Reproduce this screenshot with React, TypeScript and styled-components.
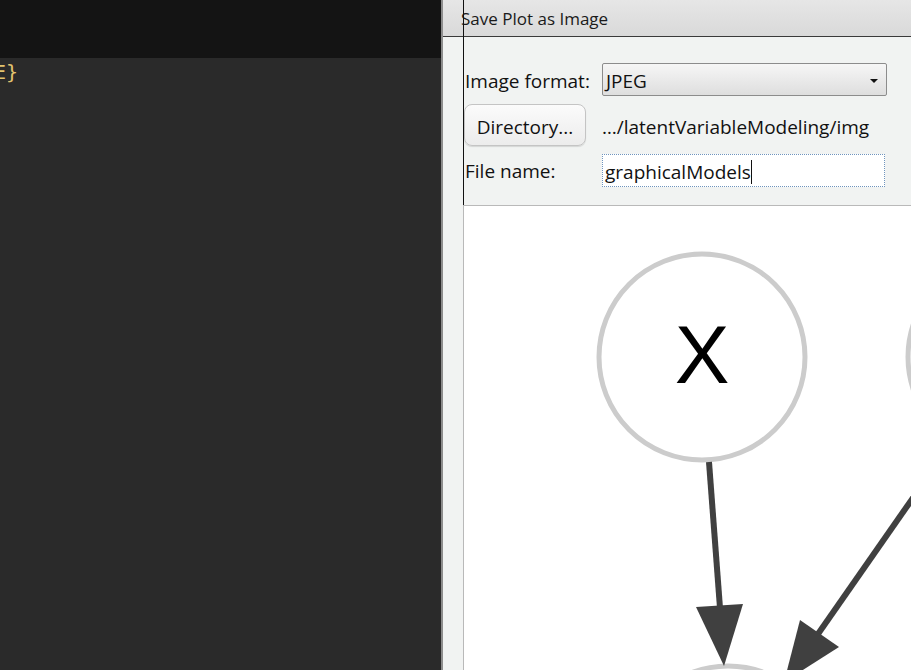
import styled, { createGlobalStyle } from "styled-components";

const GlobalStyle = createGlobalStyle`
  html, body {
    margin: 0;
    padding: 0;
    width: 911px;
    height: 670px;
    overflow: hidden;
    background: #2a2a2a;
  }
`;

const Page = styled.div`
  display: flex;
  width: 911px;
  height: 670px;
  overflow: hidden;
`;

const Editor = styled.div`
  width: 441px;
  flex-shrink: 0;
  display: flex;
  flex-direction: column;
  background: #2a2a2a;
  overflow: hidden;
`;

const EditorTop = styled.div`
  height: 58px;
  background: #141414;
`;

const CodeLine = styled.div`
  font-family: "DejaVu Sans Mono", "Liberation Mono", monospace;
  font-size: 20px;
  line-height: 28px;
  color: #e2c36f;
  margin-left: -6px;
  white-space: pre;
`;

const Dialog = styled.div`
  position: relative;
  flex: 1;
  display: flex;
  flex-direction: column;
  min-width: 0;
  border-left: 2px solid #8d8d8d;
  background: #f1f3f2;
  font-family: "Open Sans", "Noto Sans", sans-serif;
  color: #111;
`;

const TitleBar = styled.div`
  height: 36px;
  flex-shrink: 0;
  display: flex;
  align-items: center;
  padding-left: 18px;
  background: linear-gradient(#e6e6e6, #d9d9d9);
  border-bottom: 1px solid #3a3a3a;
  font-size: 17px;
  color: #1a1a1a;
`;

const CaretLine = styled.div`
  position: absolute;
  left: 20px;
  top: 0;
  width: 1px;
  height: 205px;
  background: #111;
`;

const Body = styled.div`
  flex: 1;
  display: flex;
  flex-direction: column;
  padding-left: 20px;
`;

const Form = styled.div`
  height: 168px;
  box-sizing: border-box;
  padding: 26px 0 0 2px;
  display: grid;
  grid-template-columns: 137px 285px;
  grid-template-rows: 33px 42px 33px;
  row-gap: 8px;
  align-items: center;
  font-size: 19px;
`;

const Label = styled.div<{ $shift?: number }>`
  white-space: nowrap;
  padding-top: ${(p) => p.$shift ?? 2}px;
`;

const Select = styled.div`
  height: 33px;
  box-sizing: border-box;
  display: flex;
  align-items: center;
  justify-content: space-between;
  padding: 2px 8px 0 3px;
  border: 1px solid #8c8c8c;
  border-radius: 2px;
  background: linear-gradient(#f6f6f6, #dedede);
`;

const Arrow = styled.span`
  width: 0;
  height: 0;
  border-left: 4px solid transparent;
  border-right: 4px solid transparent;
  border-top: 4px solid #111;
`;

const Button = styled.div`
  width: 122px;
  height: 42px;
  box-sizing: border-box;
  display: flex;
  align-items: center;
  justify-content: center;
  padding-top: 4px;
  margin-left: -1px;
  border: 1px solid #c4c4c4;
  border-radius: 8px;
  background: linear-gradient(#fbfbfb, #ececec);
  box-shadow: 0 1px 1px rgba(0, 0, 0, 0.12);
`;

const Path = styled.div`
  white-space: nowrap;
  padding-top: 4px;
`;

const Input = styled.div`
  width: 283px;
  height: 33px;
  box-sizing: border-box;
  display: flex;
  align-items: center;
  padding: 2px 0 0 2px;
  border: 1px dotted #6f94bd;
  background: #fff;
`;

const Cursor = styled.span`
  display: inline-block;
  width: 1px;
  height: 24px;
  background: #111;
`;

const PlotArea = styled.div`
  flex: 1;
  background: #fff;
  border-top: 1px solid #b9b9b9;
  border-left: 1px solid #b9b9b9;
  overflow: hidden;
`;

function Graph() {
  return (
    <svg width="460" height="470" viewBox="0 0 460 470">
      <g fill="none" stroke="#cccccc" strokeWidth="5">
        <circle cx="238" cy="151" r="103" />
        <circle cx="547" cy="151" r="103" />
        <circle cx="264" cy="563" r="103" />
      </g>
      <text
        x="238"
        y="177"
        textAnchor="middle"
        fontFamily="Liberation Sans, Arial, sans-serif"
        fontSize="82"
        fill="#000"
      >
        X
      </text>
      <g stroke="#404040" strokeWidth="6">
        <line x1="245" y1="256" x2="256" y2="402" />
        <line x1="490" y1="233" x2="354" y2="428" />
      </g>
      <g fill="#404040">
        <polygon points="232,401 279,398 260,460" />
        <polygon points="375,441 336,414 320,476" />
      </g>
    </svg>
  );
}

export default function App() {
  return (
    <Page>
      <GlobalStyle />
      <Editor>
        <EditorTop />
        <CodeLine>{"E}"}</CodeLine>
      </Editor>
      <Dialog>
        <TitleBar>Save Plot as Image</TitleBar>
        <Body>
          <Form>
            <Label>Image format:</Label>
            <Select>
              <span>JPEG</span>
              <Arrow />
            </Select>
            <Button>Directory...</Button>
            <Path>…/latentVariableModeling/img</Path>
            <Label $shift={0}>File name:</Label>
            <Input>
              graphicalModels
              <Cursor />
            </Input>
          </Form>
          <PlotArea>
            <Graph />
          </PlotArea>
        </Body>
        <CaretLine />
      </Dialog>
    </Page>
  );
}
